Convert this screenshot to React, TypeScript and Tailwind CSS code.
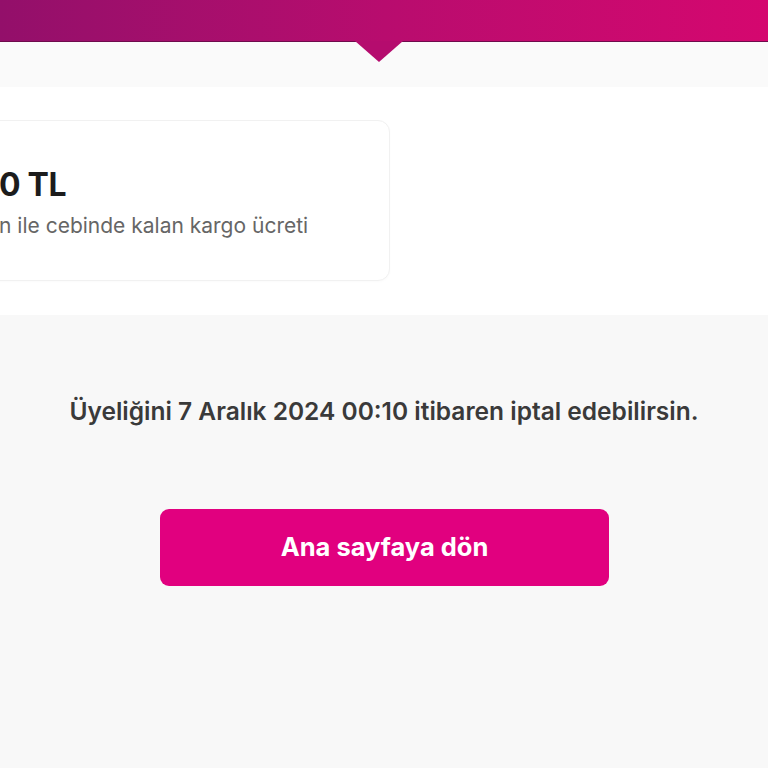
export default function App() {
  return (
    <div className="min-h-[768px] w-full overflow-hidden bg-[#f8f8f8] font-['Inter',sans-serif]">
      {/* header bar with pointer */}
      <div className="relative h-[42px] border-b border-[#6e0b4c] bg-gradient-to-r from-[#930f6a] via-[#b80c6e] to-[#d5076f]">
        <div className="absolute left-[355px] top-[41px] h-0 w-0 border-x-[24px] border-t-[21px] border-x-transparent border-t-[#b50c6e]" />
      </div>
      <div className="h-[45px] bg-[#fafafa]" />

      {/* savings card */}
      <div className="flex h-[228px] items-start bg-white pt-[33px]">
        <div className="-ml-[40px] flex h-[161px] w-[430px] flex-col justify-center rounded-[12px] border border-[#f1f1f1] bg-white pt-[4px] pl-[38px] shadow-[0_1px_3px_rgba(0,0,0,0.02)]">
          <div className="text-[32px] leading-[38px] font-bold tracking-[-0.3px] text-[#1c1c1c]">0 TL</div>
          <div className="mt-[9px] text-[21px] leading-[26px] text-[#666]">n ile cebinde kalan kargo ücreti</div>
        </div>
      </div>

      {/* info + action */}
      <div className="flex flex-col items-center pt-[81px]">
        <p className="text-[24.5px] leading-[30px] font-semibold text-[#3a3a3a]">
          Üyeliğini 7 Aralık 2024 00:10 itibaren iptal edebilirsin.
        </p>
        <button className="mt-[83px] ml-[1px] flex h-[77px] w-[449px] items-center justify-center rounded-[9px] bg-[#e1007f] text-[25.5px] font-bold text-white">
          Ana sayfaya dön
        </button>
      </div>
    </div>
  );
}
